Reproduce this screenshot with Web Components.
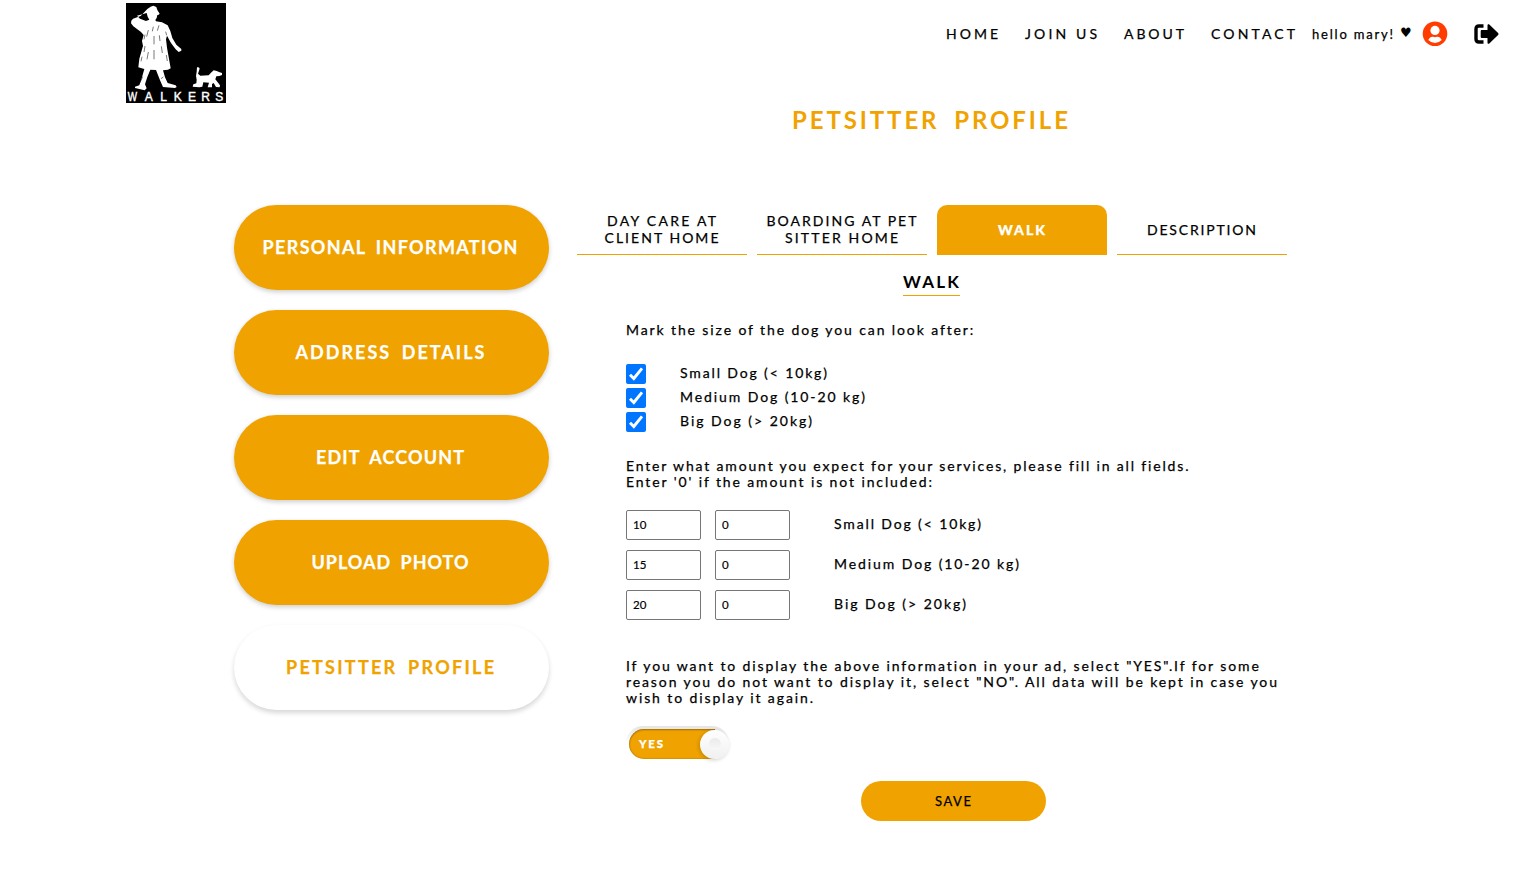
<!DOCTYPE html>
<html lang="en">
<head>
<meta charset="utf-8">
<title>Walkers - petsitter profile</title>
<style>
body{margin:0;background:#fff;color:#000;font:14px/16px Lato,"Open Sans",sans-serif;overflow:hidden}
</style>
</head>
<body>
<walkers-app></walkers-app>
<script>
const define=(name,html,setup)=>{
  const t=document.createElement('template');t.innerHTML=html;
  customElements.define(name,class extends HTMLElement{
    constructor(){super();this.attachShadow({mode:'open'}).append(t.content.cloneNode(true));}
    connectedCallback(){if(setup)setup(this,this.shadowRoot);}
  });
};

/* One line of text tracked out to the width given in its "w" attribute. */
define('tracked-text',`<style>:host{display:inline-block;white-space:nowrap;text-align:left}span{display:inline-block;-webkit-text-stroke:var(--ink,.25px)}</style><span><slot></slot></span>`,(el,root)=>{
  const s=root.querySelector('span'),w=+el.getAttribute('w'),n=el.textContent.length;
  el.style.width=w+'px';
  s.style.letterSpacing='0px';
  s.style.letterSpacing=((w-1-s.getBoundingClientRect().width)/(n-1)).toFixed(3)+'px';
});

define('brand-logo',`<style>:host{display:block;width:100px;height:100px;background:#000}svg{display:block}</style>
<svg width="100" height="100" viewBox="18 9 300 300" fill="#fff">
<path d="M82 27l10-7 8-3 9 4 3 9 7 11-3 3-4 1-2 9-4 6 2 4 18 3 17 9 8 17 6 21 12 20 15 13v5l-8 4-9-8-14-19-12-22-3 11 3 25 5 28 6 34-8 4-15 2 6 21 8 17 24 7 3 5-5 3-36-3-8-18-13-33-17-1-9 22-7 22 5 12-6 6-29-7v-4l13-4 8-24 7-25-18-5 3-26 11-38-3-15 5-18-8-9-23-17-7-9 1-8 5-6 23-8zM51 47l9 9 18 7 10-4-5-9-3-11z" fill-rule="evenodd"/>
<path d="M85 90l-5 20M100 80l-3 14M117 76l-5 16M75 104l-3 14M102 108v25M118 106l2 17M75 138l-3 18M102 150v28M85 156l-4 22M124 139l3 20M137 95l3 11M66 170l-3 14M139 165l3 18M68 230l-8 18M130 231l-7 5" fill="none" stroke="#000" stroke-width="1.6"/>
<path d="M231 202c7-2 9 3 7 7l-4 12 7 6 25-1 7-8 8-7 9 2 9 4 7 2v6l-8 3-9 1-3 9 14 18-1 6-11-1-7-12-5 3v10h-13l4-14-17-1-3 13-9 2-20-2 2-7 9-3 1-11-2-11 2-13z"/>
<text y="302" font-family="Liberation Sans" font-size="36" stroke="#fff" stroke-width="1.2"><tspan x="23" textLength="28" lengthAdjust="spacingAndGlyphs">W</tspan><tspan x="74">A</tspan><tspan x="121">L</tspan><tspan x="161">K</tspan><tspan x="204">E</tspan><tspan x="244">R</tspan><tspan x="286">S</tspan></text>
</svg>`);

define('site-header',`<style>
:host{display:flex;justify-content:space-between;align-items:flex-start;height:103px;padding:3px 19px 0 126px;box-sizing:border-box}
nav{display:flex;align-items:center;height:62px}
tracked-text{margin-right:26px}
.hi{font-size:13px;margin-right:11px;display:flex;align-items:center}.hi tracked-text{margin:0}
.hi b{font:13px/16px "DejaVu Sans";margin-left:6px;width:11px;display:block;position:relative;top:-1px}
.nav4{margin-right:16px}
svg{display:block}.user{margin-right:26px}
</style><brand-logo></brand-logo><nav>
<tracked-text w="53">HOME</tracked-text><tracked-text w="73">JOIN US</tracked-text><tracked-text w="61">ABOUT</tracked-text><tracked-text class="nav4" w="85">CONTACT</tracked-text>
<span class="hi"><tracked-text w="82">hello mary!</tracked-text><b>♥</b></span>
<svg class="user" width="26" height="26" viewBox="0 0 26 26"><circle cx="13" cy="12.700" r="12.3" fill="#ff3d00"/><circle cx="13" cy="9.400" r="4.6" fill="#fff"/><path d="M6.3 19.100c1-2.500 3-3.600 4.800-3.300 1.300.5 2.500.5 3.800 0 1.800-.3 3.800.8 4.800 3.300A9.200 9.200 0 0 1 13 22a9.200 9.200 0 0 1-6.700-2.900z" fill="#fff"/></svg>
<svg width="25" height="20" viewBox="0 0 25 20"><path d="M9.5 2H5C3 2 2 3 2 5v10c0 2 1 3 3 3h4.500" fill="none" stroke="#000" stroke-width="3.4"/><path d="M13.500 1.300c0-1 1-1.500 1.800-.8l8.800 8.600c.5.500.5 1.300 0 1.800l-8.800 8.600c-.8.700-1.800.2-1.800-.8V14H8c-.8 0-1.300-.5-1.300-1.300V7.300C6.700 6.500 7.200 6 8 6h5.500z"/></svg>
</nav>`);

define('side-button',`<style>
:host{display:flex;width:315px;height:85px;align-items:center;justify-content:center;border-radius:43px;background:#f0a300;color:#fff;box-shadow:0 2px 5px rgba(0,0,0,.2);font-size:18px;font-weight:700;word-spacing:4px;box-sizing:border-box;padding:0 2px 2px 0}
:host([active]){background:#fff;color:#f0a300;box-shadow:0 3px 5px rgba(0,0,0,.16)}
</style><slot></slot>`);

define('tab-item',`<style>
:host{display:flex;flex-direction:column;width:170px;height:50px;box-sizing:border-box;align-items:center;justify-content:center;border-bottom:1px solid #f0a300;line-height:17px;padding-bottom:1px}
:host([active]){background:#f0a300;color:#fff;border-radius:10px 10px 0 0;font-weight:900;padding:0}
</style><slot></slot>`);

define('check-row',`<style>
:host{display:flex;height:24px;align-items:flex-start;gap:34px}
i{width:20px;height:20px;border-radius:2px;background:#0075ff;display:block}
svg{display:block}span{padding-top:1px}
</style><i><svg width="20" height="20"><path d="M4 10.800L7.800 14.500L16 4.300" fill="none" stroke="#fff" stroke-width="2.900"/></svg></i><span><slot></slot></span>`);

define('price-row',`<style>
:host{display:flex;height:30px;margin-bottom:10px;align-items:center}
b{display:flex;align-items:center;width:75px;height:30px;box-sizing:border-box;border:1px solid #767676;border-radius:2px;padding-left:6px;margin-right:14px;font-size:11.500px;font-weight:400;-webkit-text-stroke:.2px}
span{margin-left:30px;padding-bottom:2px;display:flex}
</style><b></b><b></b><span><slot></slot></span>`,(el,root)=>{
  const b=root.querySelectorAll('b');b[0].textContent=el.getAttribute('first');b[1].textContent=el.getAttribute('second');
});

define('yes-switch',`<style>
:host{display:block;width:103px;height:34px;box-sizing:border-box;padding:3px 3px 2px;border-radius:17px;background:linear-gradient(#e4e4e4,#fff 50%)}
div{display:flex;align-items:center;height:30px;width:86px;box-sizing:border-box;padding-left:10px;border-radius:15px 0 0 15px;background:#f0a300;box-shadow:inset 0 1px 2px rgba(0,0,0,.25),inset 0 0 2px rgba(0,0,0,.3);color:#fff;font-size:11.500px;font-weight:900}
i{flex:none;margin-left:36px;display:flex;align-items:center;justify-content:center;width:29px;height:29px;border-radius:50%;background:linear-gradient(#fff,#f0f0f0);box-shadow:-1px 1px 4px rgba(0,0,0,.2)}
i:after{content:"";width:12px;height:12px;border-radius:50%;background:linear-gradient(#eaeaea,#f8f8f8)}
</style><div><tracked-text w="25">YES</tracked-text><i></i></div>`);

define('save-button',`<style>:host{display:flex;align-items:center;justify-content:center;width:185px;height:40px;border-radius:20px;background:#f0a300;font-size:13px}</style><slot></slot>`);

define('walk-form',`<style>
:host{display:block;padding-left:49px}
p{margin:0;display:flex;flex-direction:column;align-items:flex-start}
.size{margin:26px 0 26px}
.price{margin:22px 0 20px}
.ad{margin:38px 0 20px}
save-button{margin:21px 0 0 235px}
</style>
<p class="size"><tracked-text w="348">Mark the size of the dog you can look after:</tracked-text></p>
<check-row><tracked-text w="148">Small Dog (&lt; 10kg)</tracked-text></check-row>
<check-row><tracked-text w="186">Medium Dog (10-20 kg)</tracked-text></check-row>
<check-row><tracked-text w="133">Big Dog (&gt; 20kg)</tracked-text></check-row>
<p class="price"><tracked-text w="563">Enter what amount you expect for your services, please fill in all fields.</tracked-text><tracked-text w="307">Enter '0' if the amount is not included:</tracked-text></p>
<price-row first="10" second="0"><tracked-text w="148">Small Dog (&lt; 10kg)</tracked-text></price-row>
<price-row first="15" second="0"><tracked-text w="186">Medium Dog (10-20 kg)</tracked-text></price-row>
<price-row first="20" second="0"><tracked-text w="133">Big Dog (&gt; 20kg)</tracked-text></price-row>
<p class="ad"><tracked-text w="634">If you want to display the above information in your ad, select "YES".If for some</tracked-text><tracked-text w="652">reason you do not want to display it, select "NO". All data will be kept in case you</tracked-text><tracked-text w="188">wish to display it again.</tracked-text></p>
<yes-switch></yes-switch>
<save-button><tracked-text w="37">SAVE</tracked-text></save-button>`);

define('walkers-app',`<style>
:host{display:block;width:1518px;height:892px}
main{display:grid;grid-template-columns:315px 710px;column-gap:28px;padding-left:234px}
h1{grid-column:2;margin:0;height:102px;padding:0 3px 0 0;text-align:center;font-size:24px;line-height:34px;font-weight:700;word-spacing:6px;color:#f0a300;box-sizing:border-box;--ink:0}
aside{display:flex;flex-direction:column;gap:20px;grid-column:1}
.tabs{display:flex;gap:10px}
h2{width:57px;margin:17px auto 0 326px;height:24px;box-sizing:border-box;border-bottom:1px solid #f0a300;font-size:17px;line-height:20px;font-weight:700;--ink:0}
</style>
<site-header></site-header>
<main>
<h1><tracked-text w="277">PETSITTER PROFILE</tracked-text></h1>
<aside>
<side-button><tracked-text w="256">PERSONAL INFORMATION</tracked-text></side-button>
<side-button><tracked-text w="190">ADDRESS DETAILS</tracked-text></side-button>
<side-button><tracked-text w="149">EDIT ACCOUNT</tracked-text></side-button>
<side-button><tracked-text w="158">UPLOAD PHOTO</tracked-text></side-button>
<side-button active><tracked-text w="209">PETSITTER PROFILE</tracked-text></side-button>
</aside>
<section>
<div class="tabs">
<tab-item><tracked-text w="110">DAY CARE AT</tracked-text><tracked-text w="115">CLIENT HOME</tracked-text></tab-item>
<tab-item><tracked-text w="151">BOARDING AT PET</tracked-text><tracked-text w="114">SITTER HOME</tracked-text></tab-item>
<tab-item active><tracked-text w="48">WALK</tracked-text></tab-item>
<tab-item><tracked-text w="110">DESCRIPTION</tracked-text></tab-item>
</div>
<h2><tracked-text w="57">WALK</tracked-text></h2>
<walk-form></walk-form>
</section>
</main>`);
</script>
</body>
</html>
